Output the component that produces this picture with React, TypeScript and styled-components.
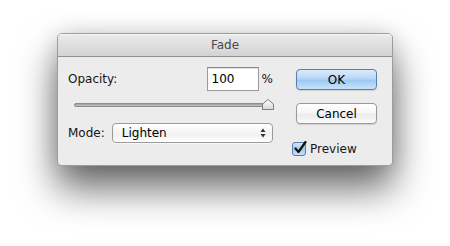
import React from 'react';
import styled, { createGlobalStyle } from 'styled-components';

const GlobalStyle = createGlobalStyle`
  html, body {
    margin: 0;
    padding: 0;
    background: #ffffff;
    width: 450px;
    height: 246px;
    overflow: hidden;
  }
  body {
    font-family: "DejaVu Sans", "Liberation Sans", sans-serif;
    font-size: 12px;
    color: #111;
  }
`;

const Page = styled.div`
  display: flex;
  justify-content: center;
  padding-top: 33px;
`;

const Window = styled.div`
  width: 336px;
  height: 133px;
  box-sizing: border-box;
  background: #ececec;
  border: 1px solid #9c9c9c;
  border-radius: 5px 5px 4px 4px;
  box-shadow: 0 22px 38px rgba(0, 0, 0, 0.6), 0 0 22px rgba(0, 0, 0, 0.12);
  display: flex;
  flex-direction: column;
  overflow: hidden;
`;

const TitleBar = styled.div`
  height: 22px;
  flex: 0 0 22px;
  background: linear-gradient(#ebebeb, #d3d3d3);
  border-bottom: 1px solid #8e8e8e;
  display: flex;
  align-items: center;
  justify-content: center;
  font-size: 12px;
  color: #4a4a4a;
  box-shadow: inset 0 1px 0 #f6f6f6;
`;

const Body = styled.div`
  flex: 1;
  display: flex;
  padding: 10px 15px 0 10px;
  gap: 23px;
`;

const LeftColumn = styled.div`
  width: 205px;
  display: flex;
  flex-direction: column;
`;

const Row = styled.div`
  display: flex;
  align-items: center;
`;

const Label = styled.span<{ grow?: boolean }>`
  flex: ${({ grow }) => (grow ? 1 : '0 0 auto')};
  font-size: 12px;
  color: #151515;
`;

const NumberBox = styled.div`
  width: 52px;
  height: 24px;
  box-sizing: border-box;
  background: #fff;
  border: 1px solid #9a9a9a;
  border-top-color: #8a8a8a;
  box-shadow: inset 0 1px 0 #e2e2e2;
  padding: 0 4px;
  display: flex;
  align-items: center;
  font-size: 12px;
  color: #000;
`;

const Percent = styled.span`
  margin-left: 3px;
  font-size: 12px;
  color: #151515;
`;

const SliderWrap = styled.div`
  position: relative;
  margin: 7px 0 0 6px;
  height: 14px;
  width: 199px;
  display: flex;
  align-items: center;
`;

const Track = styled.div`
  width: 100%;
  height: 4px;
  border-radius: 2px;
  background: linear-gradient(#9a9a9a, #c8c8c8);
  border: 1px solid #8d8d8d;
  box-sizing: border-box;
`;

const Thumb = styled.svg`
  position: absolute;
  right: -1px;
  top: 1px;
`;

const ModeRow = styled(Row)`
  margin-top: 11px;
  gap: 7px;
`;

const Select = styled.div`
  flex: 1;
  height: 20px;
  box-sizing: border-box;
  border: 1px solid #9b9b9b;
  border-radius: 4px;
  background: linear-gradient(#ffffff, #f1f1f1 60%, #ffffff);
  box-shadow: 0 1px 0 rgba(255, 255, 255, 0.6);
  display: flex;
  align-items: center;
  justify-content: space-between;
  padding: 0 6px 0 9px;
  font-size: 12px;
  color: #000;
`;

const RightColumn = styled.div`
  width: 81px;
  display: flex;
  flex-direction: column;
  padding-top: 2px;
`;

const Button = styled.div<{ primary?: boolean }>`
  height: 21px;
  box-sizing: border-box;
  border-radius: 4px;
  display: flex;
  align-items: center;
  justify-content: center;
  font-size: 12px;
  color: #000;
  border: 1px solid ${({ primary }) => (primary ? '#5b7dab' : '#9a9a9a')};
  background: ${({ primary }) =>
    primary
      ? 'linear-gradient(#dcecfb, #b6d7f6 45%, #9ccaf1 55%, #c9e4fb)'
      : 'linear-gradient(#ffffff, #f6f6f6 45%, #ececec 55%, #fafafa)'};
  box-shadow: 0 1px 1px rgba(0, 0, 0, 0.12);
  & + & {
    margin-top: 13px;
  }
`;

const CheckRow = styled(Row)`
  margin-top: 17px;
  margin-left: -4px;
  gap: 3px;
`;

const CheckBox = styled.svg`
  flex: 0 0 auto;
`;

export default function App() {
  return (
    <>
      <GlobalStyle />
      <Page>
        <Window>
          <TitleBar>Fade</TitleBar>
          <Body>
            <LeftColumn>
              <Row>
                <Label grow>Opacity:</Label>
                <NumberBox>100</NumberBox>
                <Percent>%</Percent>
              </Row>
              <SliderWrap>
                <Track />
                <Thumb width="12" height="11" viewBox="0 0 12 11">
                  <defs>
                    <linearGradient id="thumbFill" x1="0" y1="0" x2="0" y2="1">
                      <stop offset="0" stopColor="#ffffff" />
                      <stop offset="1" stopColor="#d6d6d6" />
                    </linearGradient>
                  </defs>
                  <path
                    d="M6 0.5 L11.5 5 L11.5 10.5 L0.5 10.5 L0.5 5 Z"
                    fill="url(#thumbFill)"
                    stroke="#7d7d7d"
                    strokeWidth="1"
                    strokeLinejoin="round"
                  />
                </Thumb>
              </SliderWrap>
              <ModeRow>
                <Label>Mode:</Label>
                <Select>
                  <span>Lighten</span>
                  <svg width="6" height="10" viewBox="0 0 6 10">
                    <path d="M3 0.5 L5.5 4 L0.5 4 Z" fill="#333" />
                    <path d="M3 9.5 L5.5 6 L0.5 6 Z" fill="#333" />
                  </svg>
                </Select>
              </ModeRow>
            </LeftColumn>
            <RightColumn>
              <Button primary>OK</Button>
              <Button>Cancel</Button>
              <CheckRow>
                <CheckBox width="15" height="15" viewBox="0 0 15 15">
                  <defs>
                    <linearGradient id="boxFill" x1="0" y1="0" x2="0" y2="1">
                      <stop offset="0" stopColor="#d5e9fb" />
                      <stop offset="0.5" stopColor="#9fcbf1" />
                      <stop offset="1" stopColor="#c8e3fb" />
                    </linearGradient>
                  </defs>
                  <rect x="0.5" y="1.5" width="13" height="13" rx="2.5" fill="url(#boxFill)" stroke="#5b7dab" />
                  <path
                    d="M3.5 7.5 L6.5 11 L13.5 1"
                    fill="none"
                    stroke="#111"
                    strokeWidth="2.2"
                    strokeLinecap="round"
                    strokeLinejoin="round"
                  />
                </CheckBox>
                <Label>Preview</Label>
              </CheckRow>
            </RightColumn>
          </Body>
        </Window>
      </Page>
    </>
  );
}
